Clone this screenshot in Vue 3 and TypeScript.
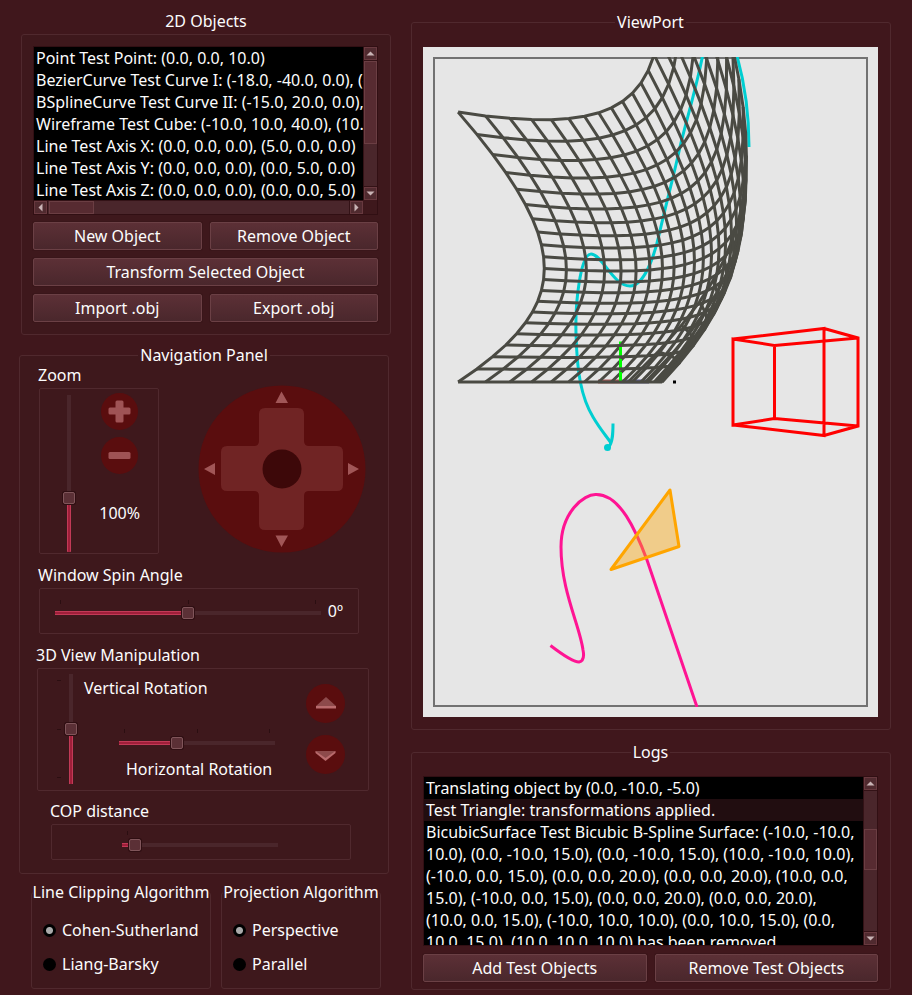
<script setup lang="ts">
import { computed, ref } from 'vue'

const objects: string[] = [
  'Point Test Point: (0.0, 0.0, 10.0)',
  'BezierCurve Test Curve I: (-18.0, -40.0, 0.0), (-10.0, 20.0, 0.0)',
  'BSplineCurve Test Curve II: (-15.0, 20.0, 0.0), (-10.0, 5.0, 0.0)',
  'Wireframe Test Cube: (-10.0, 10.0, 40.0), (10.0, 10.0, 40.0)',
  'Line Test Axis X: (0.0, 0.0, 0.0), (5.0, 0.0, 0.0)',
  'Line Test Axis Y: (0.0, 0.0, 0.0), (0.0, 5.0, 0.0)',
  'Line Test Axis Z: (0.0, 0.0, 0.0), (0.0, 0.0, 5.0)',
]

interface LogLine {
  text: string
  shaded: boolean
}

const logs: LogLine[] = [
  { text: 'Translating object by (0.0, -10.0, -5.0)', shaded: false },
  { text: 'Test Triangle: transformations applied.', shaded: true },
  {
    text:
      'BicubicSurface Test Bicubic B-Spline Surface: (-10.0, -10.0, 10.0), (0.0, -10.0, 15.0), ' +
      '(0.0, -10.0, 15.0), (10.0, -10.0, 10.0), (-10.0, 0.0, 15.0), (0.0, 0.0, 20.0), ' +
      '(0.0, 0.0, 20.0), (10.0, 0.0, 15.0), (-10.0, 0.0, 15.0), (0.0, 0.0, 20.0), ' +
      '(0.0, 0.0, 20.0), (10.0, 0.0, 15.0), (-10.0, 10.0, 10.0), (0.0, 10.0, 15.0), ' +
      '(0.0, 10.0, 15.0), (10.0, 10.0, 10.0) has been removed.',
    shaded: false,
  },
]

const zoom = ref(33)
const spin = ref(0)
const vertical = ref(0)
const horizontal = ref(36)
const cop = ref(5)
const clipping = ref('cohen')
const projection = ref('perspective')

const spinFill = computed(() => (spin.value + 180) / 3.6)
const verticalFill = computed(() => (vertical.value + 180) / 3.6)

// Perspective projection of a patch that bulges along Z in both directions.
const FOCAL = 305
const STEPS = 20

function project(s: number, t: number): string {
  const bulge = 4 * (t / STEPS) * (1 - t / STEPS)
  const u = -14.22 + 1.922 * s - 0.0622 * s * s + 4.92 * bulge
  const w = 22.6 + 0.372 * s - 0.052 * s * s + 4.24 * bulge
  const x = 650 + (FOCAL * u) / w
  const y = 382 - (FOCAL * (STEPS - t)) / w
  return `${x.toFixed(1)},${y.toFixed(1)}`
}

const range = Array.from({ length: STEPS + 1 }, (_, i) => i)
const meshLines = [
  ...range.map((s) => range.map((t) => project(s, t)).join(' ')),
  ...range.map((t) => range.map((s) => project(s, t)).join(' ')),
]
</script>

<template>
  <main class="app">
    <div class="left">
      <section class="objects">
        <h2 class="title">2D Objects</h2>
        <div class="panel">
          <div class="list">
            <ul class="items" aria-label="2D Objects">
              <li v-for="item in objects" :key="item">{{ item }}</li>
            </ul>
            <div class="bar vbar">
              <button type="button" class="arrow" aria-label="Scroll up"><svg viewBox="0 0 11 11"><path d="M1.500 7.500l4-4 4 4z" /></svg></button>
              <div class="rail"><div class="grip grip-objects"></div></div>
              <button type="button" class="arrow" aria-label="Scroll down"><svg viewBox="0 0 11 11"><path d="M1.500 3.500l4 4 4-4z" /></svg></button>
            </div>
            <div class="bar hbar">
              <button type="button" class="arrow" aria-label="Scroll left"><svg viewBox="0 0 11 11"><path d="M7.500 1.500l-4 4 4 4z" /></svg></button>
              <div class="rail"><div class="grip grip-wide"></div></div>
              <button type="button" class="arrow" aria-label="Scroll right"><svg viewBox="0 0 11 11"><path d="M3.500 1.500l4 4-4 4z" /></svg></button>
            </div>
          </div>
          <div class="buttons">
            <button type="button" class="btn">New Object</button>
            <button type="button" class="btn">Remove Object</button>
            <button type="button" class="btn wide">Transform Selected Object</button>
            <button type="button" class="btn">Import .obj</button>
            <button type="button" class="btn">Export .obj</button>
          </div>
        </div>
      </section>

      <fieldset class="nav">
        <legend>Navigation Panel</legend>
        <div class="nav-top">
          <div class="zoom-group">
            <label class="caption" for="zoom">Zoom</label>
            <div class="box zoom-box">
              <input id="zoom" v-model.number="zoom" class="slider upright" type="range" min="0" max="100" :style="{ '--fill': zoom + '%' }" />
              <div class="zoom-side">
                <button type="button" class="round" aria-label="Zoom in">
                  <svg viewBox="0 0 37 37"><circle cx="18.500" cy="18.500" r="18.500" fill="#5a0d0e" /><path d="M16 7.500h5q1.500 0 1.500 1.500v5.500H28q1.500 0 1.500 1.500v4q0 1.500-1.500 1.500h-5.500V28q0 1.500-1.500 1.500h-5q-1.500 0-1.500-1.500v-6.500H9q-1.500 0-1.500-1.500v-4q0-1.500 1.500-1.500h5.500V9q0-1.500 1.500-1.500z" fill="#9f5355" /></svg>
                </button>
                <button type="button" class="round" aria-label="Zoom out">
                  <svg viewBox="0 0 37 37"><circle cx="18.500" cy="18.500" r="18.500" fill="#5a0d0e" /><rect x="7.500" y="15" width="22" height="7" rx="1.500" fill="#9f5355" /></svg>
                </button>
                <output class="percent" for="zoom">100%</output>
              </div>
            </div>
          </div>
          <svg class="dpad" viewBox="0 0 168 168" role="group" aria-label="Move window">
            <circle cx="84" cy="84" r="83.500" fill="#5a0d0e" />
            <path d="M67 23h33q6 0 6 6v27q0 5 5 5h28q6 0 6 6v33q0 6-6 6h-28q-5 0-5 5v28q0 6-6 6H67q-6 0-6-6v-28q0-5-5-5H29q-6 0-6-6V67q0-6 6-6h27q5 0 5-5V29q0-6 6-6z" fill="#702424" />
            <circle cx="84" cy="84" r="19.500" fill="#3d0809" />
            <path d="M83.500 6.500l6.500 11.500H77.500zM83.500 162l6.500-11.500H77.500zM6 84l11-6v12zM161 84l-11-6v12z" fill="#a15657" />
          </svg>
        </div>

        <label class="caption" for="spin">Window Spin Angle</label>
        <div class="box spin-box">
          <div class="ticked">
            <div class="ticks"><i></i><i></i><i></i></div>
            <input id="spin" v-model.number="spin" class="slider" type="range" min="-180" max="180" :style="{ '--fill': spinFill + '%' }" />
          </div>
          <output for="spin">{{ spin }}º</output>
        </div>

        <h3 class="caption view-caption">3D View Manipulation</h3>
        <div class="box view-box">
          <div class="side-ticks"><i></i><i></i><i></i></div>
          <input id="vrot" v-model.number="vertical" class="slider upright short" type="range" min="-180" max="180" :style="{ '--fill': verticalFill + '%' }" />
          <div class="rotations">
            <label for="vrot">Vertical Rotation</label>
            <div class="ticked narrow">
              <div class="ticks"><i></i><i></i><i></i></div>
              <input id="hrot" v-model.number="horizontal" class="slider" type="range" min="0" max="100" :style="{ '--fill': horizontal + '%' }" />
            </div>
            <label class="hlabel" for="hrot">Horizontal Rotation</label>
          </div>
          <div class="depth">
            <button type="button" class="round big" aria-label="Move forward">
              <svg viewBox="0 0 39 39"><circle cx="19.500" cy="19.500" r="19.500" fill="#5a0d0e" /><path d="M20 13l10 9H10z" fill="#8d4a4b" /><path d="M10 22h20v2.500H10z" fill="#b96b6d" /></svg>
            </button>
            <button type="button" class="round big" aria-label="Move backward">
              <svg viewBox="0 0 39 39"><circle cx="19.500" cy="19.500" r="19.500" fill="#5a0d0e" /><path d="M9.500 16h20v2l-10 8-10-8z" fill="#b96b6d" /><path d="M9.500 16h20l-10 7z" fill="#8d4a4b" /></svg>
            </button>
          </div>
        </div>

        <label class="caption cop-caption" for="cop">COP distance</label>
        <div class="box cop-box">
          <div class="ticked narrow">
            <div class="ticks"><i></i></div>
            <input id="cop" v-model.number="cop" class="slider" type="range" min="0" max="100" :style="{ '--fill': cop + '%' }" />
          </div>
        </div>
      </fieldset>

      <div class="algorithms">
        <fieldset class="choice">
          <legend>Line Clipping Algorithm</legend>
          <label><input v-model="clipping" type="radio" name="clipping" value="cohen" />Cohen-Sutherland</label>
          <label><input v-model="clipping" type="radio" name="clipping" value="liang" />Liang-Barsky</label>
        </fieldset>
        <fieldset class="choice">
          <legend>Projection Algorithm</legend>
          <label><input v-model="projection" type="radio" name="projection" value="perspective" />Perspective</label>
          <label><input v-model="projection" type="radio" name="projection" value="parallel" />Parallel</label>
        </fieldset>
      </div>
    </div>

    <div class="right">
      <fieldset class="viewport">
        <legend>ViewPort</legend>
        <svg class="canvas" viewBox="423 47 455 670" role="img" aria-label="Rendered scene">
          <defs>
            <clipPath id="window"><rect x="434" y="57" width="434" height="650" /></clipPath>
          </defs>
          <rect x="423" y="47" width="455" height="670" fill="#e6e6e6" />
          <rect x="434" y="58" width="433" height="648" fill="none" stroke="#727272" stroke-width="2" />
          <g clip-path="url(#window)" fill="none" stroke-width="3">
            <path d="M550.500 645.500C559 652 572 662 579 662C584 661 584 655 583 650C580 626 561 591 561 547C561 512 584 494 596 494.500C620 494 636 531 647 560L697 707" stroke="#ff1493" />
            <path d="M749 147C749 120 746 88 737 56M702.500 56C697 85 686 122 680 147C673 179 667 200 659 235C654 257 644 286 630 286C613 286 602 254 591 254C581 254 575 300 576 334C577 372 581 397 593 417C600 429 607 437 611 443" stroke="#00ced1" />
            <path d="M613 423.500C613 432 613 443 608 448" stroke="#00ced1" />
            <circle cx="607.500" cy="447.500" r="3.500" fill="#00ced1" />
            <path d="M598 381.500h22" stroke="#b05a5a" stroke-width="4" />
            <path d="M620 381.500h29" stroke="#5a5a90" stroke-width="4" />
            <path d="M620.500 382V341.500" stroke="#00ff00" />
            <polyline v-for="(points, i) in meshLines" :key="i" :points="points" stroke="#4a4a43" />
            <path d="M620.500 379V372M620.500 366V359M620.500 355V347" stroke="#00ff00" />
            <path d="M733 339V425L774.500 418.500V345.500zL824 328.500V435.500L733 425M824 328.500L858 338V426L824 435.500M774.500 345.500L858 338M774.500 418.500L858 426" stroke="#ff0000" />
            <path d="M670 490L679 546.500L611 569.500z" fill="#ffa500" fill-opacity="0.4" stroke="#ffa500" stroke-linejoin="round" />
            <rect x="673" y="380.500" width="3" height="3" fill="#000" />
          </g>
        </svg>
      </fieldset>

      <fieldset class="logs">
        <legend>Logs</legend>
        <div class="log-list">
          <div class="log-text" role="log" tabindex="0">
            <p v-for="line in logs" :key="line.text" :class="{ shaded: line.shaded }">{{ line.text }}</p>
          </div>
          <div class="bar vbar">
            <button type="button" class="arrow" aria-label="Scroll up"><svg viewBox="0 0 11 11"><path d="M1.500 7.500l4-4 4 4z" /></svg></button>
            <div class="rail log-rail"><div class="grip grip-logs"></div></div>
            <button type="button" class="arrow" aria-label="Scroll down"><svg viewBox="0 0 11 11"><path d="M1.500 3.500l4 4 4-4z" /></svg></button>
          </div>
        </div>
        <div class="buttons">
          <button type="button" class="btn">Add Test Objects</button>
          <button type="button" class="btn">Remove Test Objects</button>
        </div>
      </fieldset>
    </div>
  </main>
</template>

<style>
body {
  margin: 0;
  background: #40171c;
}
</style>

<style scoped>
*,
*::before {
  box-sizing: border-box;
}
.app {
  display: grid;
  grid-template-columns: 372px minmax(0, 1fr);
  gap: 20px;
  min-height: 100vh;
  padding: 10px 21px 4px 19px;
  background: #40171c;
  color: #fcfcfc;
  font: 16px/22px 'Noto Sans', sans-serif;
}
h2,
h3,
p,
ul {
  margin: 0;
  padding: 0;
  font: inherit;
  list-style: none;
}
button,
input {
  font: inherit;
  color: inherit;
  margin: 0;
  padding: 0;
}
fieldset {
  min-width: 0;
  margin: 0;
  border: 1px solid #50292e;
  border-radius: 3px;
}
legend {
  margin: 0 auto;
  padding: 0 2px;
}
.title {
  text-align: center;
  margin-bottom: 2px;
}
.objects {
  margin: 0 0 9px 2px;
}
.panel {
  padding: 11px 12px 12px 11px;
  border: 1px solid #50292e;
  border-radius: 3px;
  background: #3e181c;
}
.list {
  display: grid;
  grid-template-columns: minmax(0, 1fr) 14px;
  grid-template-rows: 153px 14px;
  border: 1px solid #310f13;
  margin-bottom: 7px;
}
.items {
  overflow: hidden;
  background: #000;
}
.items li {
  height: 22px;
  padding-left: 2px;
  white-space: nowrap;
}
.bar {
  display: flex;
  background: #4a262b;
  border: 0 solid #331216;
}
.vbar {
  flex-direction: column;
  border-left-width: 1px;
}
.hbar {
  border-top-width: 1px;
}
.arrow {
  flex: none;
  display: block;
  width: 13px;
  height: 13px;
  border: 1px solid #68393f;
  background: #502a2f;
}
.arrow svg {
  display: block;
  width: 11px;
  height: 11px;
  fill: #c9b4b6;
}
.rail {
  flex: 1;
  display: flex;
  min-width: 0;
  min-height: 0;
  border: 0 solid #331216;
}
.vbar .rail {
  flex-direction: column;
  border-width: 1px 0;
}
.hbar .rail {
  border-width: 0 1px;
}
.grip {
  border: 1px solid #6b3e43;
  background: #572b31;
}
.grip-objects {
  height: 66%;
}
.grip-wide {
  width: 15%;
  margin-left: 1px;
}
.grip-logs {
  height: 41px;
}
.log-rail {
  padding-top: 38px;
}
.buttons {
  display: grid;
  grid-template-columns: 1fr 1fr;
  gap: 8px;
}
.btn {
  height: 28px;
  border: 1px solid #6b4045;
  border-radius: 2px;
  background: linear-gradient(#5c3036, #4a272c);
  box-shadow: 0 0 0 1px #35131780;
  line-height: 22px;
}
.wide {
  grid-column: span 2;
}
.nav {
  width: 370px;
  padding: 0 17px 13px;
  margin-bottom: 7px;
  background: #3e181c;
}
.caption {
  display: block;
  height: 18px;
  margin-bottom: 4px;
  margin-left: 1px;
  line-height: 18px;
}
.box {
  display: flex;
  border: 1px solid #50292e;
  border-radius: 2px;
}
.nav-top {
  display: flex;
  justify-content: space-between;
  padding-right: 5px;
  margin-bottom: 12px;
}
.zoom-box {
  width: 120px;
  height: 166px;
  margin-left: 2px;
  padding: 4px 18px 2px 22px;
  justify-content: space-between;
}
.zoom-side {
  display: flex;
  flex-direction: column;
  align-items: center;
  gap: 7px;
}
.percent {
  margin-top: 21px;
}
.round {
  width: 37px;
  height: 37px;
  border: 0;
  border-radius: 50%;
  background: none;
}
.round svg {
  display: block;
}
.big {
  width: 39px;
  height: 39px;
}
.dpad {
  width: 168px;
  height: 168px;
  margin-top: 19px;
}
.slider {
  appearance: none;
  display: block;
  width: 100%;
  height: 14px;
  background:
    linear-gradient(#a01f3a, #a01f3a) left center / var(--fill) 2px no-repeat,
    linear-gradient(#c23a57, #c23a57) left center / var(--fill) 4px no-repeat,
    linear-gradient(#4a262b, #4a262b) center / 100% 4px no-repeat;
}
.slider::-webkit-slider-thumb {
  appearance: none;
  width: 12px;
  height: 12px;
  border: 1px solid #80555a;
  border-radius: 2px;
  background: #5b3036;
  box-shadow: 0 0 0 1px #2f0e12;
}
.upright {
  writing-mode: vertical-lr;
  direction: rtl;
  width: 14px;
  height: 157px;
  margin-top: 2px;
  background:
    linear-gradient(#a01f3a, #a01f3a) center bottom / 2px var(--fill) no-repeat,
    linear-gradient(#c23a57, #c23a57) center bottom / 4px var(--fill) no-repeat,
    linear-gradient(#4a262b, #4a262b) center / 4px 100% no-repeat;
}
.short {
  height: 110px;
  margin-top: 0;
}
.ticked {
  width: 266px;
}
.narrow {
  width: 156px;
}
.ticks {
  display: flex;
  justify-content: space-between;
  padding: 0 5px;
  height: 4px;
  margin-bottom: 3px;
}
.ticks i {
  width: 1px;
  background: #2b0e11;
}
.spin-box {
  width: 320px;
  height: 46px;
  margin: 0 0 12px 2px;
  padding: 11px 15px 0 15px;
  justify-content: space-between;
}
.spin-box .ticks {
  margin-bottom: 2px;
}
.view-caption {
  margin-left: -1px;
}
.view-box {
  width: 332px;
  height: 123px;
  margin-bottom: 11px;
  padding: 5px 23px 0 19px;
}
.side-ticks {
  display: flex;
  flex-direction: column;
  justify-content: space-between;
  height: 110px;
  padding: 6px 0;
  margin-right: 3px;
}
.side-ticks i {
  width: 4px;
  height: 1px;
  background: #2b0e11;
}
.rotations {
  margin-left: 6px;
  padding-top: 3px;
}
.rotations label {
  display: block;
}
.rotations .ticked {
  margin: 30px 0 8px 35px;
}
.rotations .hlabel {
  margin-left: 42px;
}
.depth {
  display: flex;
  flex-direction: column;
  gap: 12px;
  margin-left: auto;
  padding-top: 10px;
}
.cop-caption {
  margin-left: 13px;
}
.cop-box {
  width: 300px;
  height: 36px;
  margin-left: 14px;
  padding: 6px 0 0 70px;
}
.algorithms {
  display: flex;
  gap: 10px;
  padding-left: 12px;
}
.choice {
  display: flex;
  flex-direction: column;
  gap: 12px;
  width: 180px;
  padding: 16px 0 13px;
  background: #3e181c;
}
.choice + .choice {
  width: 160px;
}
.choice legend {
  padding: 0;
  white-space: nowrap;
}
.choice label {
  display: flex;
  align-items: center;
  gap: 6px;
  padding-left: 11px;
}
.choice input {
  appearance: none;
  width: 13px;
  height: 13px;
  border-radius: 50%;
  background: #000;
}
.choice input:checked {
  background: radial-gradient(circle, #aaa 0 3px, #000 4px);
}
.viewport {
  margin: 1px 0 11px;
  padding: 14px 12px 12px 11px;
}
.canvas {
  display: block;
  width: 100%;
}
.logs {
  padding: 13px 12px 7px 11px;
}
.log-list {
  display: grid;
  grid-template-columns: minmax(0, 1fr) 14px;
  height: 170px;
  margin-bottom: 8px;
  border: 1px solid #310f13;
}
.log-text {
  overflow: hidden;
  background: #000;
}
.log-text p {
  padding: 0 6px 0 2px;
}
.log-text .shaded {
  background: #210d10;
}
</style>
